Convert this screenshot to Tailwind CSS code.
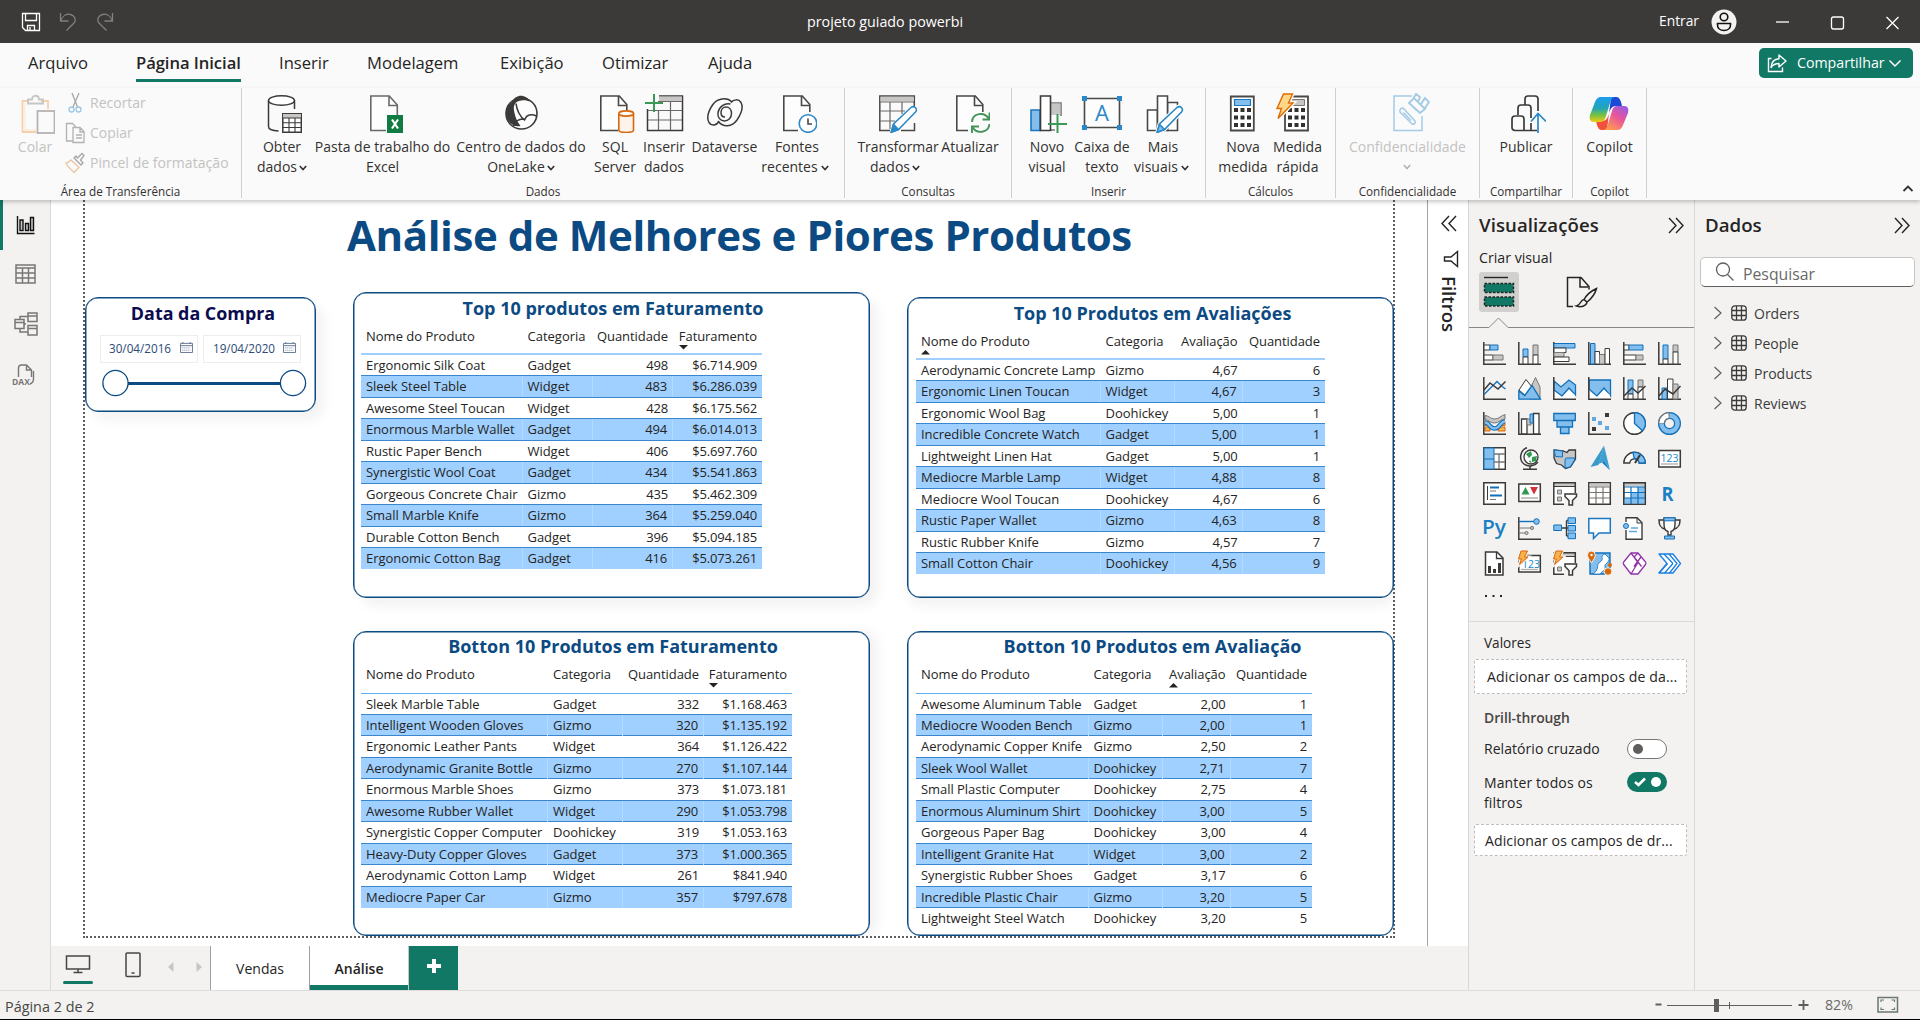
<!DOCTYPE html>
<html lang="pt-BR">
<head>
<meta charset="utf-8">
<title>projeto guiado powerbi</title>
<script src="https://cdn.jsdelivr.net/npm/@tailwindcss/browser@4"></script>
</head>
<body class="w-[1920px] h-[1020px] overflow-hidden bg-[#f3f2f1] font-['Open_Sans','Noto_Sans',sans-serif] text-[#252423]">
<div class="flex flex-col w-[1920px] h-[1020px]">

<!-- Title bar -->
<header class="relative flex items-center h-[43px] shrink-0 bg-[#3b3a39] text-white text-[14.3px]">
  <svg class="ml-[21px]" width="94" height="22" viewBox="0 0 94 22" fill="none" stroke="#fff" stroke-width="1.3">
    <path d="M1.5 2.5h17v17H4.500L1.500 16.500zM4.500 2.500v7h11v-7M6.500 19.500v-5h7v5M9 16v3"/>
    <g stroke="#82807e"><path d="M39.500 2v8h8M39.500 10c2-5 6-7.500 10-6.500 4.500 1 6 5.500 3.500 8.500L45.500 19.500"/><path d="M91.500 2v8h-8M91.500 10c-2-5-6-7.500-10-6.500-4.500 1-6 5.500-3.500 8.500L85.500 19.500"/></g>
  </svg>
  <span class="ml-[692px] w-[157px] whitespace-nowrap">projeto guiado powerbi</span>
  <span class="ml-[695px] w-[52px] text-[13.800px]">Entrar</span>
  <svg width="26" height="26" viewBox="0 0 26 26"><circle cx="13" cy="13" r="12.500" fill="#f3f2f1"/><g fill="none" stroke="#111" stroke-width="1.600"><circle cx="13" cy="8" r="3.800"/><path d="M6.500 14.500h13v1.500c0 3.300-2.900 5.500-6.500 5.500s-6.500-2.200-6.500-5.500z"/></g></svg>
  <svg class="ml-[38px]" width="126" height="16" viewBox="0 0 126 16" fill="none" stroke="#fff" stroke-width="1.300"><path d="M1 8h13"/><rect x="56.500" y="3" width="12" height="12" rx="2"/><path d="M111.500 3l12 12M123.500 3l-12 12"/></svg>
</header>

<!-- Ribbon tabs -->
<nav class="flex h-[45px] shrink-0 bg-[#fafafa] text-[16.600px] text-[#252423]">
  <div class="flex w-[1000px] h-[39px] leading-[39px] whitespace-nowrap">
    <span class="ml-[28px] w-[108px]">Arquivo</span>
    <span class="w-[105px] font-semibold text-[16.600px] tracking-[-0.050px] border-b-[3px] border-[#117865]">Página Inicial</span>
    <span class="ml-[38px] w-[88px]">Inserir</span>
    <span class="w-[133px]">Modelagem</span>
    <span class="w-[102px]">Exibição</span>
    <span class="w-[106px]">Otimizar</span>
    <span>Ajuda</span>
  </div>
  <button class="flex items-center ml-[759px] mt-[5px] w-[154px] h-[30px] rounded-[5px] bg-[#117865] text-white text-[14.200px] pl-[8px]">
    <svg width="21" height="20" viewBox="0 0 21 20" fill="none" stroke="#fff" stroke-width="1.400"><path d="M4.500 5.500H1.500v13h14v-4"/><path d="M12 2l7 6-7 6v-3.500c-4 0-6 1-8 4 .4-5 3-8.500 8-8.800z" stroke-linejoin="round"/></svg>
    <span class="ml-[9px] w-[91px] text-left">Compartilhar</span>
    <svg width="14" height="9" viewBox="0 0 14 9" fill="none" stroke="#fff" stroke-width="1.500"><path d="M1.500 1.500L7 7l5.500-5.500"/></svg>
  </button>
</nav>

<!-- Ribbon -->
<section class="relative z-10 flex h-[112px] shrink-0 bg-[#fafafa] text-[14px] leading-[20px] text-[#333130] shadow-[0_2px_4px_rgba(0,0,0,0.220)]">
  <div class="flex flex-col w-[242px] h-[110px] border-r border-[#d0d0d0]">
    <div class="flex h-[93px] shrink-0 text-[#c3c2c1]">
      <div class="flex flex-col items-center ml-[10px] w-[50px] pt-[5px]">
        <svg width="40" height="44" viewBox="0 0 40 44" fill="none" stroke-width="1.800"><path d="M14 8H7.500v31H21M26 8h7v8" stroke="#f5cfae"/><path d="M9.500 10v27H21" stroke="#fbeedb" stroke-width="2"/><path d="M13 10.500V6.500h4c0-5 7-5 7 0h4v4z" stroke="#c8c6c4"/><rect x="23.500" y="18" width="17" height="22" transform="translate(-1)" fill="#fafafa" stroke="#b5b3b1"/></svg>
        <span>Colar</span>
      </div>
      <div class="flex flex-col ml-[5px] whitespace-nowrap">
        <div class="flex items-center h-[30px]"><svg width="25" height="22" viewBox="0 0 25 22" fill="none" stroke-width="1.300"><path d="M7 1l5.500 14M14 1L8 15" stroke="#a8a6a4"/><circle cx="6.500" cy="17.500" r="2.500" stroke="#9cc6e6"/><circle cx="13.500" cy="17.500" r="2.500" stroke="#9cc6e6"/></svg>Recortar</div>
        <div class="flex items-center h-[30px]"><svg width="25" height="22" viewBox="0 0 25 22" fill="none" stroke="#b3b1af" stroke-width="1.300"><path d="M8 19H1.500V1.500h6l3 3M8 19V5.500h7l4 4v11H8zM15 5.500v4.500h4M11 13h6M11 16h6"/></svg>Copiar</div>
        <div class="flex items-center h-[30px] tracking-[0.050px]"><svg width="25" height="22" viewBox="0 0 25 22" fill="none" stroke-width="1.300"><path d="M6 8l8 7.500-5 5C6 18 3 15 1 11c2 0 3-1 5-3z" stroke="#f0c39c"/><path d="M9 6l7 7 2-2-2.500-3L19 3.500l-2-2L12.500 6 11 4z" stroke="#a8a6a4"/></svg>Pincel de formatação</div>
      </div>
    </div>
    <span class="text-center text-[11.700px] text-[#333130]">Área de Transferência</span>
  </div>

  <div class="flex flex-col w-[603px] h-[110px] border-r border-[#d0d0d0]">
    <div class="flex h-[93px] shrink-0 pl-[8px] pt-[5px] text-center whitespace-nowrap">
      <div class="flex flex-col items-center w-[64px]">
        <svg class="shrink-0 mb-[4px]" width="40" height="40" viewBox="0 0 40 40" fill="none" stroke="#3b3a39" stroke-width="1.500"><path d="M6.500 7.500v26c0 2.500 4 4.200 10 4.500M32.500 7.500V16" fill="none"/><ellipse cx="19.500" cy="7.500" rx="13" ry="4.800" fill="#fff"/><path d="M20.800 20.800h18.500v18.500H20.800z" fill="#fff"/><path d="M21 21h18v4H21z" fill="#c8c6c4" stroke="none"/><path d="M21 25h18M21 29.800h18M21 34.500h18M27 25v14M33 25v14" stroke-width="1.100"/></svg>
        <span class="w-[64px] text-center">Obter<br>dados<svg class="inline ml-[2px]" width="8" height="6" viewBox="0 0 8 6" fill="none" stroke="#333130" stroke-width="1.600"><path d="M.8 1L4 4.500 7.200 1"/></svg></span>
      </div>
      <div class="flex flex-col items-center w-[137px]">
        <svg class="shrink-0 mb-[4px]" width="40" height="40" viewBox="0 0 40 40" fill="none" stroke="#6b6967" stroke-width="1.600"><path d="M23 37.500H7.800V3h18.500l8 9v10" fill="#fdfdfd"/><path d="M26 3v9.500h8.500"/><path d="M24 22h16v18H24z" fill="#107c41" stroke="none"/><path d="M29 26.500l6 9M35 26.500l-6 9" stroke="#fff" stroke-width="2.200"/></svg>
        Pasta de trabalho do<br><span>Excel</span>
      </div>
      <div class="flex flex-col items-center w-[140px]">
        <svg class="shrink-0 mb-[4px]" width="40" height="40" viewBox="0 0 40 40" fill="none" stroke="#3b3a39" stroke-width="1.600"><circle cx="20.500" cy="20.500" r="15.500" fill="#fdfdfd"/><path d="M11 9c2-5 7-7 11-6s6 3 6.500 5.500C24 6.500 18 6.500 14.500 10c-2 2.500-2 6-1 10 1 5 3 9 6 13-5 1-9-1-12-5C3 21 4 14 11 9z" fill="#3b3a39" stroke="none"/><path d="M15 10.500c1 8 4 13 9 17M12.500 33c1.500-5 5-7.500 11.500-7 1.500-4 6-5.500 11.500-3"/></svg>
        <span class="tracking-[0.040px]">Centro de dados do</span><span>OneLake<svg class="inline ml-[2px]" width="8" height="6" viewBox="0 0 8 6" fill="none" stroke="#333130" stroke-width="1.600"><path d="M.8 1L4 4.500 7.200 1"/></svg></span>
      </div>
      <div class="flex flex-col items-center w-[48px]">
        <svg class="shrink-0 mb-[4px]" width="40" height="40" viewBox="0 0 40 40" fill="none" stroke="#4a4846" stroke-width="1.600"><path d="M23 37.500H5.800V3h18.500l7.500 8.500v6" fill="#fdfdfd"/><path d="M23.500 3v9.500H32"/><path d="M23.800 20.500v16.500c0 3.300 14.700 3.300 14.700 0V20.500" fill="#fdf3ea" stroke="#d9670b"/><ellipse cx="31.200" cy="20.500" rx="7.400" ry="2.600" fill="#fff" stroke="#d9670b"/></svg>
        SQL<br><span>Server</span>
      </div>
      <div class="flex flex-col items-center w-[50px]">
        <svg class="shrink-0 mb-[4px]" width="40" height="40" viewBox="0 0 40 40" fill="none" stroke="#6b6967" stroke-width="1.500"><path d="M3.500 16v21.500h35V3H15" stroke="#3b3a39"/><path d="M15 3.500h23v5H15z" fill="#c8c6c4" stroke="none"/><path d="M14 8.500h24M4 17.500h34M4 27h34M14.500 17v20M26.500 8v29" stroke-width="1.200"/><path d="M1 10h18M10 1v18" stroke="#3a9a55" stroke-width="2"/></svg>
        Inserir<br><span>dados</span>
      </div>
      <div class="flex flex-col items-center w-[71px]">
        <svg class="shrink-0 mb-[4px]" width="40" height="40" viewBox="0 0 40 40" fill="none" stroke="#3b3a39" stroke-width="1.500"><path d="M27 9C22 4 12 5 7.500 12c-4 6-6 13-3.500 17.500 2.500 4 7.500 3 10-1"/><path d="M13 28c5 7 14 6 19-1 4-6 6.500-13 4-17.500-2.500-4-7.500-3-10 0"/><path d="M25.500 11c-6-1.500-11.500 3-12.500 8.500-.8 5 2.500 8.500 6.500 8.500s7-3.500 7-7.500-2.500-6.500-5.500-6.500-5 2.500-5 5.500 2 4.500 4 4.500"/></svg>
        Dataverse
      </div>
      <div class="flex flex-col items-center w-[74px]">
        <svg class="shrink-0 mb-[4px]" width="40" height="40" viewBox="0 0 40 40" fill="none" stroke="#4a4846" stroke-width="1.600"><path d="M21 37.500H6.800V3h18.500l7.500 8.500V19" fill="#fdfdfd"/><path d="M24.500 3v9.500H33"/><circle cx="31" cy="30.500" r="8.800" fill="#fff" stroke="#2b88c8"/><path d="M31 25.500v5.500h4"/></svg>
        Fontes<br><span class="-ml-[4px]">recentes<svg class="inline ml-[3px]" width="8" height="6" viewBox="0 0 8 6" fill="none" stroke="#333130" stroke-width="1.600"><path d="M.8 1L4 4.500 7.200 1"/></svg></span>
      </div>
    </div>
    <span class="text-center text-[11.700px]">Dados</span>
  </div>

  <div class="flex flex-col w-[167px] h-[110px] border-r border-[#d0d0d0]">
    <div class="flex h-[93px] shrink-0 pl-[12px] pt-[5px] text-center whitespace-nowrap">
      <div class="flex flex-col items-center w-[80px]">
        <svg class="shrink-0 mb-[4px]" width="40" height="40" viewBox="0 0 40 40" fill="none" stroke="#6b6967" stroke-width="1.500"><path d="M13 37.500H2.800V3h34.500v10M37.500 30v7.500H24" stroke="#4a4846"/><path d="M3.500 3.800h33.500v4.500H3.500z" fill="#c8c6c4" stroke="none"/><path d="M3 9h34M3 18h25M3 28h15M13 9v27M25 9v12" stroke-width="1.200"/><path d="M14.500 39l2-8L34 14.500c3.500-2.500 7 1.500 4.500 4.500L21.500 36.500z" fill="#fff" stroke="#2b88c8"/><path d="M14 39.500l2.500-8 5 5z" fill="#2b88c8" stroke="#2b88c8"/></svg>
        <span class="tracking-[-0.050px] ml-[2px]">Transformar</span><span class="-ml-[4px]">dados<svg class="inline ml-[2px]" width="8" height="6" viewBox="0 0 8 6" fill="none" stroke="#333130" stroke-width="1.600"><path d="M.8 1L4 4.500 7.200 1"/></svg></span>
      </div>
      <div class="flex flex-col items-center w-[66px]">
        <svg class="shrink-0 mb-[4px]" width="40" height="40" viewBox="0 0 40 40" fill="none" stroke="#4a4846" stroke-width="1.600"><path d="M18 37.500H6.800V3h18.500l7.500 8.500V19" fill="#fdfdfd"/><path d="M24.500 3v9.500H33"/><path d="M22 29c.5-9 12.500-11 17-3M39.500 19.500V26.500h-7M39.500 31c-1 9-13 10.500-17 3M22 40.500V33.500h7" stroke="#43935a" stroke-width="1.900"/></svg>
        Atualizar
      </div>
    </div>
    <span class="text-center text-[11.700px]">Consultas</span>
  </div>

  <div class="flex flex-col w-[194px] h-[110px] border-r border-[#d0d0d0]">
    <div class="flex h-[93px] shrink-0 pl-[10px] pt-[5px] text-center whitespace-nowrap">
      <div class="flex flex-col items-center w-[50px]">
        <svg class="shrink-0 mb-[4px]" width="40" height="40" viewBox="0 0 40 40" fill="none" stroke-width="1.600"><path d="M4 17h9v20.500H4z" fill="#83beec" stroke="#1a78c2"/><path d="M24 10h10v13M24 37h4" stroke="#797775" fill="#c8c6c4"/><path d="M24 10.500h9.500V22H24z" fill="#c8c6c4" stroke="none"/><path d="M13.500 3h10v34.500h-10z" fill="#fff" stroke="#3b3a39"/><path d="M21 31h19M30.500 21v19" stroke="#3a9a55" stroke-width="2"/></svg>
        Novo<br><span>visual</span>
      </div>
      <div class="flex flex-col items-center w-[60px]">
        <svg class="shrink-0 mb-[4px]" width="40" height="40" viewBox="0 0 40 40" fill="none"><path d="M2.500 5.500h35v29h-35z" stroke="#4a4846" stroke-width="1.600" fill="#fdfdfd"/><g fill="#2b88c8"><path d="M0 3h5v5H0zM35 3h5v5h-5zM0 32h5v5H0zM35 32h5v5h-5z"/></g><text x="20" y="28" text-anchor="middle" font-size="22" fill="#2b88c8">A</text></svg>
        Caixa de<br><span>texto</span>
      </div>
      <div class="flex flex-col items-center w-[62px]">
        <svg class="shrink-0 mb-[4px] ml-[3px]" width="40" height="40" viewBox="0 0 40 40" fill="#fff" stroke="#4a4846" stroke-width="1.600"><path d="M2.500 17h10v20.500h-10zM22.500 9.500h10v28h-10z"/><path d="M12.500 3h10v34.500h-10z"/><path d="M12.500 39l2-8L32 14.500c3.500-2.500 7 1.500 4.500 4.500L19.500 36.500z" stroke="#fafafa" stroke-width="4"/><path d="M12.500 39l2-8L32 14.500c3.500-2.500 7 1.500 4.500 4.500L19.500 36.500z" stroke="#2b88c8"/><path d="M12 39.500l2.500-8 5 5z" fill="#83beec" stroke="#2b88c8"/></svg>
        Mais<br><span class="-ml-[3px]">visuais<svg class="inline ml-[3px]" width="8" height="6" viewBox="0 0 8 6" fill="none" stroke="#333130" stroke-width="1.600"><path d="M.8 1L4 4.500 7.200 1"/></svg></span>
      </div>
    </div>
    <span class="text-center text-[11.700px]">Inserir</span>
  </div>

  <div class="flex flex-col w-[130px] h-[110px] border-r border-[#d0d0d0]">
    <div class="flex h-[93px] shrink-0 pl-[10px] pt-[5px] text-center whitespace-nowrap">
      <div class="flex flex-col items-center w-[54px]">
        <svg class="shrink-0 mb-[4px]" width="40" height="40" viewBox="0 0 40 40"><path d="M7.800 3.500h23v34h-23z" fill="#fff" stroke="#4a4846" stroke-width="1.800"/><path d="M11.500 6.500h16v6h-16z" fill="#83beec" stroke="#1a78c2" stroke-width="1.200"/><path d="M11 15h4v4h-4zM17.500 15h4v4h-4zM24 15h4v4h-4zM11 22.500h4v4h-4zM17.500 22.500h4v4h-4zM24 22.500h4v4h-4zM11 30h4v4h-4zM17.500 30h4v4h-4zM24 30h4v4h-4z" fill="#333130"/></svg>
        Nova<br><span>medida</span>
      </div>
      <div class="flex flex-col items-center w-[55px]">
        <svg class="shrink-0 mb-[4px] -ml-[3px]" width="40" height="40" viewBox="0 0 40 40"><path d="M9 3.500h23v34H9z" fill="#fff" stroke="#4a4846" stroke-width="1.800"/><path d="M15 6.500h13.500v6H12z" fill="#c8c6c4" stroke="#797775"/><path d="M12 15h4v4h-4zM18.500 15h4v4h-4zM25 15h4v4h-4zM12 22.500h4v4h-4zM18.500 22.500h4v4h-4zM25 22.500h4v4h-4zM12 30h4v4h-4zM18.500 30h4v4h-4zM25 30h4v4h-4z" fill="#333130"/><path d="M7.500 1h9l-4 9h4.500L2 25.500l3.500-10H1z" fill="#fad27a" stroke="#fafafa" stroke-width="4"/><path d="M7.500 1h9l-4 9h4.500L2 25.500l3.500-10H1z" fill="#fdd78a" stroke="#e06c00" stroke-width="1.400"/></svg>
        Medida<br><span>rápida</span>
      </div>
    </div>
    <span class="text-center text-[11.700px]">Cálculos</span>
  </div>

  <div class="flex flex-col w-[144px] h-[110px] border-r border-[#d0d0d0]">
    <div class="flex h-[93px] shrink-0 justify-center pt-[5px] text-center text-[#c3c2c1] whitespace-nowrap">
      <div class="flex flex-col items-center">
        <svg class="shrink-0 mb-[4px] ml-[5px]" width="40" height="40" viewBox="0 0 40 40" fill="none" stroke="#a3cbe6" stroke-width="1.500"><path d="M22 3H4v34.500h28V23"/><path d="M10 19c-1-3 2-5 4-3l11 12c1 2-1 4-3 3zM13.500 19.500l7.500 8"/><path d="M19 10l5-5 11 11-5 4zM23 6l3-5 4 3-2 5M31 11l4-6 4 4-4 6M23 14l6 5" stroke-width="1.900"/></svg>
        Confidencialidade<br>
        <svg class="mt-[7px]" width="8" height="6" viewBox="0 0 8 6" fill="none" stroke="#b5b3b1" stroke-width="1.600"><path d="M.8 1L4 4.500 7.200 1"/></svg>
      </div>
    </div>
    <span class="text-center text-[11.700px]">Confidencialidade</span>
  </div>

  <div class="flex flex-col w-[93px] h-[110px] border-r border-[#d0d0d0]">
    <div class="flex h-[93px] shrink-0 justify-center pt-[5px] text-center">
      <div class="flex flex-col items-center">
        <svg class="shrink-0 mb-[4px]" width="40" height="40" viewBox="0 0 40 40" fill="none" stroke="#3b3a39" stroke-width="1.700"><path d="M19 12V6c0-2 1-3 3-3h7c2 0 3 1 3 3v12M12 22v-7c0-2 1-3 3-3h7c2 0 3 1 3 3v10M6 26c0-2 1-3 3-3h6c2 0 3 1 3 3v11.500H9c-2 0-3-1-3-3zM18 37.500h13M25 30v7"/><path d="M32 40V21M25 28.500l7-8 8 8" stroke="#2b88c8"/></svg>
        Publicar
      </div>
    </div>
    <span class="text-center text-[11.700px]">Compartilhar</span>
  </div>

  <div class="flex flex-col w-[74px] h-[110px] border-r border-[#d0d0d0]">
    <div class="flex h-[93px] shrink-0 justify-center pt-[5px] text-center">
      <div class="flex flex-col items-center">
        <svg class="shrink-0 mb-[4px]" width="40" height="40" viewBox="0 0 40 40">
          <defs>
            <linearGradient id="cpA" x1="0" y1="0" x2="0" y2="1"><stop offset="0" stop-color="#1a9cf0"/><stop offset=".45" stop-color="#22a6b8"/><stop offset=".7" stop-color="#6cc04a"/><stop offset="1" stop-color="#f2cb10"/></linearGradient>
            <linearGradient id="cpB" x1="1" y1="0" x2=".3" y2="1"><stop offset="0" stop-color="#8d5bf0"/><stop offset=".5" stop-color="#e8559a"/><stop offset="1" stop-color="#ff9a50"/></linearGradient>
          </defs>
          <path d="M22 4h5c3 0 4 2 5 5l1 4h-6c-4 0-6 3-7 8z" fill="#1b4bd6"/>
          <path d="M18 37h-5c-3 0-4-2-5-5l-1-4h6c4 0 6-3 7-8z" fill="#f0503c"/>
          <path d="M12 4h14c-3 0-4 3-5 6l-4 13c-1 4-3 6-6 6H5c-4 0-5-3-4-7L6 9c1-3 3-5 6-5z" fill="url(#cpA)"/>
          <path d="M28 37H14c3 0 4-3 5-6l4-13c1-4 3-5 6-5h6c4 0 5 3 4 7l-5 12c-1 3-3 5-6 5z" fill="url(#cpB)"/>
        </svg>
        Copilot
      </div>
    </div>
    <span class="text-center text-[11.700px]">Copilot</span>
  </div>
  <svg class="ml-[255px] mt-[96px]" width="12" height="9" viewBox="0 0 12 9" fill="none" stroke="#333" stroke-width="1.800"><path d="M1.500 7L6 2.500 10.500 7"/></svg>
</section>

<!-- Workspace -->
<main class="flex h-[790px] shrink-0">
  <aside class="flex flex-col w-[51px] border-r border-[#dbdad9]">
    <div class="flex items-center h-[50px] pl-[13px] border-l-[3px] border-[#117865]">
      <svg width="20" height="20" viewBox="0 0 20 20" fill="none" stroke="#111" stroke-width="1.400"><path d="M1.500 1v17.500h17"/><path d="M4 5h3v10.500H4zM9.500 8.500h3v7h-3zM14.500 2.500h3v13h-3z" fill="#c8c6c4"/></svg>
    </div>
    <div class="flex items-center h-[49px] pl-[15px] pb-[2px]"><svg width="21" height="20" viewBox="0 0 21 20" fill="none" stroke="#797775" stroke-width="1.500"><path d="M1 1h19v18H1zM1 4h19M1 9h19M1 14h19M7.500 4v15M13.500 4v15"/></svg></div>
    <div class="flex items-center h-[50px] pl-[14px]"><svg width="24" height="24" viewBox="0 0 24 24" fill="none" stroke="#797775" stroke-width="1.500"><path d="M1 7.500h9v9H1zM1 10.500h9M14 1h9v8.500h-9zM14 4h9M14 13.500h9V23h-9zM14 16.500h9M6 7.500V4.500h8M6 16.500V20h8M10 12h2"/></svg></div>
    <div class="flex items-center h-[50px] pl-[12px] pt-[3px]"><svg width="24" height="24" viewBox="0 0 24 24" fill="none" stroke="#797775" stroke-width="1.400"><path d="M6.500 13V4c0-2 1-3 3-3h5l5 5v7M14.500 1v5h5M21.500 7v8c0 3-1 4-3.500 5"/><text x="0" y="20.500" font-size="8.500" font-weight="700" stroke="none" fill="#797775">DAX</text></svg></div>
  </aside>

  <div class="flex flex-col w-[1417px]">
    <div class="flex h-[746px]">
      <!-- Report canvas: visuals are freely placed -->
      <div class="relative w-[1376px] bg-white overflow-hidden">
        <div class="absolute left-[32px] top-[-12px] w-[1312px] h-[750px] border-2 border-dotted border-[#605e5c]"></div>
        <h1 class="absolute left-[296px] top-[7px] leading-[56px] text-[42px] font-bold tracking-[-0.420px] text-[#0b4a82] whitespace-nowrap">Análise de Melhores e Piores Produtos</h1>

        <div class="absolute left-[34px] top-[97px] w-[231px] h-[115px] rounded-[13px] border border-[#0b4a82] bg-white shadow-[8px_8px_12px_rgba(0,0,0,0.050),inset_0_0_0_0.500px_#0b4a82]">
          <div class="h-[30px] leading-[30px] text-center pl-[5px] text-[17.900px] font-bold text-[#0b0b50]">Data da Compra</div>
          <div class="flex gap-[5px] mt-[7px] ml-[14px] text-[11.700px] text-[#2b4a78]">
            <div class="flex items-center w-[98px] h-[28px] border border-[#eeedec] pl-[8px]"><span class="w-[71px]">30/04/2016</span><svg class="shrink-0 mb-[3px]" width="13" height="11" viewBox="0 0 14 12" fill="none" stroke="#5c6f8c" stroke-width="1"><path d="M.5 1.500h13v10H.5zM1 4h12"/><path d="M2.500 6.500h9M2.500 9h9" stroke-dasharray="1 1.200"/><path d="M3 0v2M11 0v2"/></svg></div>
            <div class="flex items-center w-[98px] h-[28px] border border-[#eeedec] pl-[9px]"><span class="w-[70px]">19/04/2020</span><svg class="shrink-0 mb-[3px]" width="13" height="11" viewBox="0 0 14 12" fill="none" stroke="#5c6f8c" stroke-width="1"><path d="M.5 1.500h13v10H.5zM1 4h12"/><path d="M2.500 6.500h9M2.500 9h9" stroke-dasharray="1 1.200"/><path d="M3 0v2M11 0v2"/></svg></div>
          </div>
          <svg class="ml-[16px] mt-[6px]" width="206" height="28" viewBox="0 0 206 28"><path d="M26 14.500h154" stroke="#0b4a82" stroke-width="3"/><circle cx="13.500" cy="14" r="12.600" fill="#fff" stroke="#0b4a82" stroke-width="1.300"/><circle cx="191" cy="14" r="12.600" fill="#fff" stroke="#0b4a82" stroke-width="1.300"/></svg>
        </div>

        <div id="topFat" class="absolute left-[302px] top-[92px] w-[517px] h-[306px] pl-[7px] pt-[1px] rounded-[13px] border border-[#0b4a82] bg-white shadow-[8px_8px_12px_rgba(0,0,0,0.050),inset_0_0_0_0.500px_#0b4a82]"></div>
        <div id="topAva" class="absolute left-[856px] top-[97px] w-[487px] h-[301px] pl-[8px] pt-[1px] rounded-[13px] border border-[#0b4a82] bg-white shadow-[0_8px_12px_rgba(0,0,0,0.050),inset_0_0_0_0.500px_#0b4a82]"></div>
        <div id="botFat" class="absolute left-[302px] top-[431px] w-[517px] h-[305px] pl-[7px] rounded-[13px] border border-[#0b4a82] bg-white shadow-[8px_0_12px_rgba(0,0,0,0.050),inset_0_0_0_0.500px_#0b4a82]"></div>
        <div id="botAva" class="absolute left-[856px] top-[431px] w-[487px] h-[305px] pl-[8px] rounded-[13px] border border-[#0b4a82] bg-white shadow-[inset_0_0_0_0.500px_#0b4a82]"></div>
      </div>

      <!-- Collapsed filter pane -->
      <div class="flex flex-col items-center w-[41px] bg-white border-l border-[#a5a3a1]">
        <svg class="mt-[15px] ml-[1px]" width="16" height="17" viewBox="0 0 16 17" fill="none" stroke="#252423" stroke-width="1.400"><path d="M8 1L1 8.500 8 16M15 1L8 8.500 15 16"/></svg>
        <svg class="mt-[18px] ml-[6px]" width="16" height="18" viewBox="0 0 16 18" fill="none" stroke="#252423" stroke-width="1.400"><path d="M14.500 1.500v15L8 11H1.500V7H8z"/></svg>
        <span class="mt-[8px] ml-[1px] [writing-mode:vertical-rl] text-[18.600px] leading-[20px] font-semibold">Filtros</span>
      </div>
    </div>

    <!-- Page tabs -->
    <div class="flex h-[44px]">
      <div class="flex flex-col w-[30px] ml-[12px] pt-[9px] items-center">
        <svg width="26" height="19" viewBox="0 0 26 19" fill="none" stroke="#484644" stroke-width="1.500"><path d="M1.500 1h23v13h-23zM13 14v3.500M8.500 17.500h9"/></svg>
        <span class="w-[30px] h-[3px] mt-[7px] rounded bg-[#117865]"></span>
      </div>
      <svg class="ml-[32px] mt-[6px]" width="16" height="26" viewBox="0 0 16 26" fill="none" stroke="#484644" stroke-width="1.500"><rect x="1" y="1" width="14" height="23.500" rx="1"/><path d="M6.500 21h3"/></svg>
      <svg class="ml-[26px] mt-[15px]" width="36" height="12" viewBox="0 0 36 12" fill="#c8c6c4"><path d="M6.500 1v10L1 6zM29.500 1v10L35 6z"/></svg>
      <div class="ml-[7px] w-[100px] border-l border-r border-[#a19f9d] bg-white text-center text-[14px] leading-[45px]">Vendas</div>
      <div class="w-[99px] bg-white border-r border-[#c8c6c4] text-center text-[14px] font-semibold leading-[45px] shadow-[inset_0_-5px_0_#117865]">Análise</div>
      <div class="flex w-[49px] bg-[#117865] items-center justify-center pb-[4px]"><svg width="14" height="14" viewBox="0 0 14 14" stroke="#fff" stroke-width="4"><path d="M7 0v14M0 7h14"/></svg></div>
    </div>
  </div>

  <!-- Visualizations pane -->
  <section class="flex flex-col w-[226px] border-l border-[#d8d7d6] text-[14px]">
    <div class="flex items-center justify-between mt-[12px] h-[26px] pl-[10px] pr-[10px] text-[18.600px] font-semibold">
      <span class="tracking-[0.080px]">Visualizações</span>
      <svg width="16" height="17" viewBox="0 0 16 17" fill="none" stroke="#252423" stroke-width="1.400"><path d="M1 1l7 7.500L1 16M8 1l7 7.500L8 16"/></svg>
    </div>
    <span class="mt-[10px] ml-[10px] leading-[20px] text-[14.200px] font-medium">Criar visual</span>
    <div class="flex mt-[4px] ml-[10px]">
      <div class="flex items-center justify-center size-[40px] rounded-[3px] bg-[#d2d0ce]">
        <svg width="32" height="32" viewBox="0 0 32 32"><path d="M1 1.500h24" stroke="#252423" stroke-width="1.400"/><g fill="#117865" stroke="#252423" stroke-width="1.500" stroke-dasharray="2.500 1.500"><path d="M1.500 7.500h29v9h-29zM1.500 21h29v9h-29z"/></g></svg>
      </div>
      <svg class="ml-[47px] mt-[4px]" width="32" height="32" viewBox="0 0 32 32" fill="none" stroke="#252423" stroke-width="1.500"><path d="M7 30.500H1.500V1.500H15l8 9v3M14 1.500v9.500h8"/><path d="M30.500 12.500C25 15 20 20 18 23.500l3 2.500c4-3 8-8 9.500-13.500zM18 23.500c-4 .5-3 5.500-7.500 6.500 4 1.500 10 .5 10.500-4"/></svg>
    </div>
    <svg class="mt-[5px]" width="225" height="12" viewBox="0 0 225 12" fill="none" stroke="#8a8886"><path d="M0 10.500h20l9.500-9.500 9.500 9.500H225"/></svg>
    <div id="viz" class="grid grid-cols-6 grid-rows-7 w-[210px] ml-[13px] mt-[12px] auto-rows-[35px]"></div>
    <svg class="ml-[15px] mt-[8px]" width="20" height="4" viewBox="0 0 20 4" fill="#252423"><path d="M1 1h2v2H1zM8.500 1h2v2h-2zM16 1h2v2h-2z"/></svg>
    <div class="mt-[23px] border-t border-[#dbdad9]"></div>
    <span class="mt-[11px] ml-[15px] leading-[20px] text-[13.600px]">Valores</span>
    <div class="mt-[6px] ml-[5px] w-[213px] h-[35px] border border-dashed border-[#c0bebc] bg-white pl-[12px] leading-[33px] tracking-[0.100px] whitespace-nowrap rounded-[2px] text-[14.100px]">Adicionar os campos de da...</div>
    <span class="mt-[14px] ml-[15px] leading-[20px] text-[#484644] font-semibold text-[13.900px] tracking-[-0.050px]">Drill-through</span>
    <div class="flex mt-[11px] ml-[15px] leading-[20px]"><span class="w-[143px] tracking-[0.050px]">Relatório cruzado</span>
      <span class="flex items-center w-[40px] h-[20px] rounded-full border border-[#797775] bg-white pl-[5px]"><span class="size-[10px] rounded-full bg-[#605e5c]"></span></span></div>
    <div class="flex mt-[14px] ml-[15px] leading-[20px]"><span class="w-[143px] tracking-[0.120px]">Manter todos os<br>filtros</span>
      <span class="flex items-center w-[40px] h-[20px] mt-[-1px] rounded-full bg-[#117865] pl-[7px] gap-[5px]"><svg width="12" height="10" viewBox="0 0 12 10" fill="none" stroke="#fff" stroke-width="2.600"><path d="M1 5l3.500 3L11 1.500"/></svg><span class="size-[10px] rounded-full bg-white"></span></span></div>
    <div class="mt-[11px] ml-[5px] w-[213px] h-[32px] border border-dashed border-[#c0bebc] bg-white pl-[10px] leading-[32px] tracking-[0.080px] whitespace-nowrap rounded-[2px] text-[14.100px]">Adicionar os campos de dr...</div>
  </section>

  <!-- Data pane -->
  <section class="flex flex-col w-[226px] border-l border-[#d8d7d6]">
    <div class="flex items-center justify-between mt-[12px] h-[26px] pl-[10px] pr-[10px] text-[18.700px] font-semibold">
      <span>Dados</span>
      <svg width="16" height="17" viewBox="0 0 16 17" fill="none" stroke="#252423" stroke-width="1.400"><path d="M1 1l7 7.500L1 16M8 1l7 7.500L8 16"/></svg>
    </div>
    <div class="flex items-center mt-[19px] ml-[5px] w-[215px] h-[30px] rounded-[5px] border border-[#c8c6c4] border-b-[#605e5c] bg-white pl-[14px] text-[15.800px] text-[#6b6967]">
      <svg width="20" height="20" viewBox="0 0 20 20" fill="none" stroke="#605e5c" stroke-width="1.300"><circle cx="8" cy="7.500" r="6.500"/><path d="M12.500 12.500L18.500 18.500"/></svg>
      <span class="ml-[8px] pt-[5px]">Pesquisar</span>
    </div>
    <div id="tables" class="mt-[11px] text-[14px] text-[#3b3a39]"></div>
  </section>
</main>

<!-- Status bar -->
<footer class="flex items-center h-[30px] shrink-0 border-t border-[#dddcdb] border-b border-b-black pl-[5px] text-[14.400px] text-[#484644]">
  <span class="w-[1648px] pt-[3px]">Página 2 de 2</span>
  <svg width="160" height="20" viewBox="0 0 160 20" fill="none" stroke="#605e5c"><path d="M2.500 9.500h6" stroke-width="2"/><path d="M14 10.500h125" stroke-width="1.200"/><path d="M63.500 4v13" stroke-width="5"/><path d="M76.500 7v7"/><path d="M145.500 10h10M150.500 5v10" stroke-width="1.800"/></svg>
  <span class="ml-[12px] w-[52px] text-[14.200px] text-[#6b6967]">82%</span>
  <svg width="22" height="18" viewBox="0 0 22 18" fill="none" stroke="#6b7775" stroke-width="1.500"><path d="M1 1.500h19.500v14.500H1z"/><path d="M4 6V4h3M14.500 4h3v2M17.500 11.500v2h-3M7 13.500H4v-2" stroke-width="1.200"/></svg>
</footer>
</div>

<script>
const tables = [
  {id:'topFat', title:'Top 10 produtos em Faturamento', cols:'grid grid-cols-[161.500px_70px_80.500px_89px] w-[401px]', rule:'h-[33px] border-b-2 border-[#9fcfff]', sort:[3,'down'],
   head:['Nome do Produto','Categoria','Quantidade','Faturamento'],
   rows:[['Ergonomic Silk Coat','Gadget','498','$6.714.909'],['Sleek Steel Table','Widget','483','$6.286.039'],['Awesome Steel Toucan','Widget','428','$6.175.562'],['Enormous Marble Wallet','Gadget','494','$6.014.013'],['Rustic Paper Bench','Widget','406','$5.697.760'],['Synergistic Wool Coat','Gadget','434','$5.541.863'],['Gorgeous Concrete Chair','Gizmo','435','$5.462.309'],['Small Marble Knife','Gizmo','364','$5.259.040'],['Durable Cotton Bench','Gadget','396','$5.094.185'],['Ergonomic Cotton Bag','Gadget','416','$5.073.261']]},
  {id:'topAva', title:'Top 10 Produtos em Avaliações', cols:'grid grid-cols-[184.500px_74px_68px_82.500px] w-[409px]', rule:'h-[33px] border-b-2 border-[#9fcfff]', sort:[0,'up'],
   head:['Nome do Produto','Categoria','Avaliação','Quantidade'],
   rows:[['Aerodynamic Concrete Lamp','Gizmo','4,67','6'],['Ergonomic Linen Toucan','Widget','4,67','3'],['Ergonomic Wool Bag','Doohickey','5,00','1'],['Incredible Concrete Watch','Gadget','5,00','1'],['Lightweight Linen Hat','Gadget','5,00','1'],['Mediocre Marble Lamp','Widget','4,88','8'],['Mediocre Wool Toucan','Doohickey','4,67','6'],['Rustic Paper Wallet','Gizmo','4,63','8'],['Rustic Rubber Knife','Gizmo','4,57','7'],['Small Cotton Chair','Doohickey','4,56','9']]},
  {id:'botFat', title:'Botton 10 Produtos em Faturamento', cols:'grid grid-cols-[187px_75px_81px_88px] w-[431px]', rule:'h-[33.600px] border-b border-[#62aef2]', sort:[3,'down'],
   head:['Nome do Produto','Categoria','Quantidade','Faturamento'],
   rows:[['Sleek Marble Table','Gadget','332','$1.168.463'],['Intelligent Wooden Gloves','Gizmo','320','$1.135.192'],['Ergonomic Leather Pants','Widget','364','$1.126.422'],['Aerodynamic Granite Bottle','Gizmo','270','$1.107.144'],['Enormous Marble Shoes','Gizmo','373','$1.073.181'],['Awesome Rubber Wallet','Widget','290','$1.053.798'],['Synergistic Copper Computer','Doohickey','319','$1.053.163'],['Heavy-Duty Copper Gloves','Gadget','373','$1.000.365'],['Aerodynamic Cotton Lamp','Widget','261','$841.940'],['Mediocre Paper Car','Gizmo','357','$797.678']]},
  {id:'botAva', title:'Botton 10 Produtos em Avaliação', cols:'grid grid-cols-[172.500px_74px_68px_81.500px] w-[396px]', rule:'h-[33.600px] border-b border-[#62aef2]', sort:[2,'up'],
   head:['Nome do Produto','Categoria','Avaliação','Quantidade'],
   rows:[['Awesome Aluminum Table','Gadget','2,00','1'],['Mediocre Wooden Bench','Gizmo','2,00','1'],['Aerodynamic Copper Knife','Gizmo','2,50','2'],['Sleek Wool Wallet','Doohickey','2,71','7'],['Small Plastic Computer','Doohickey','2,75','4'],['Enormous Aluminum Shirt','Doohickey','3,00','5'],['Gorgeous Paper Bag','Doohickey','3,00','4'],['Intelligent Granite Hat','Widget','3,00','2'],['Synergistic Rubber Shoes','Gadget','3,17','6'],['Incredible Plastic Chair','Gizmo','3,20','5'],['Lightweight Steel Watch','Doohickey','3,20','5']]}
];
const arrows = {down:'<path d="M0 0h9L4.500 4.500z"/>', up:'<path d="M0 4.500h9L4.500 0z"/>'};
for (const t of tables) {
  const head = t.head.map((h, i) => `<div class="relative ${i > 1 ? 'text-right pr-[5px] tracking-[-0.060px]' : 'px-[5px]'}"><span class="relative">${h}${t.sort[0] === i ? `<svg class="absolute left-0 top-[18px]" width="9" height="5" viewBox="0 0 9 5" fill="#252423">${arrows[t.sort[1]]}</svg>` : ''}</span></div>`).join('');
  const rows = t.rows.map((r, n) => {
    const last = n === t.rows.length - 1;
    return `<div class="${t.cols} h-[21.440px] leading-[21px] ${n % 2 ? 'bg-[#a0d0ff]' : ''} ${last ? '' : 'border-b border-[#3a86d0]'}">` +
      r.map((c, i) => `<div class="px-[5px] ${i > 1 ? 'text-right tracking-[-0.150px]' : 'tracking-[-0.040px]'} ${i < 3 && n % 2 ? 'border-r border-[#b3daff]' : ''}">${c}</div>`).join('') + '</div>';
  }).join('');
  document.getElementById(t.id).innerHTML =
    `<div class="h-[28px] leading-[29px] text-center pr-[4px] text-[18px] font-bold text-[#0b4a82]">${t.title}</div>` +
    `<div class="text-[13px] whitespace-nowrap"><div class="${t.cols} ${t.rule} pt-[4px] leading-[20px]">${head}</div>${rows}</div>`;
}

const D = 'fill="#fff" stroke="#3b3a39"', B = 'fill="#83beec" stroke="#1070bb"', G = 'fill="#c8c6c4" stroke="#797775"';
const axis = '<path d="M.8 0v22.200H23" fill="none" stroke="#3b3a39" stroke-width="1.500"/>';
const bolt = '<path d="M2.500-1h7l-3 6H10L1 13l2-6H0z" fill="#f9b14a" stroke="#f3f2f1" stroke-width="3"/><path d="M3-1h6.500l-3 6H10L1.500 12.500 3.500 7H.5z" fill="#f9b14a" stroke="#d9670b"/>';
const funnel = '<path d="M12 12h11.500v2.500l-4 4V23h-3.500v-4.500l-4-4z" fill="#fff" stroke="#3b3a39" stroke-width="1.500"/>';
const icons = [
  axis+`<path ${D} d="M1 3h6v5H1z"/><path ${B} d="M7 3h8v5H7z"/><path ${D} d="M1 13h9v5H1z"/><path ${G} d="M10 13h10v5H10z"/>`,
  axis+`<path ${B} d="M5 7h5v8H5z"/><path ${D} d="M5 15h5v7H5z"/><path ${G} d="M15 3h5v10h-5z"/><path ${D} d="M15 13h5v9h-5z"/>`,
  axis+`<path ${B} d="M1 1.500h21V6H1z"/><path ${D} d="M1 6h12v4.500H1z"/><path ${G} d="M1 10.500h10V15H1z"/><path ${D} d="M1 15h15v4.500H1z"/>`,
  axis+`<path ${B} d="M2.500 1.500H7V22H2.500z"/><path ${D} d="M7 9.500h4.500V22H7z"/><path ${G} d="M11.500 12.500H17V22h-5.500z"/><path ${D} d="M17 6.500h4.500V22H17z"/>`,
  axis+`<path ${D} d="M1 3h5v5H1z"/><path ${B} d="M6 3h14v5H6z"/><path ${D} d="M1 13h12v5H1z"/><path ${G} d="M13 13h7v5h-7z"/>`,
  axis+`<path ${B} d="M5 3h5v14H5z"/><path ${D} d="M5 17h5v5H5z"/><path ${G} d="M15 3h5v7h-5z"/><path ${D} d="M15 10h5v12h-5z"/>`,
  axis+`<g fill="none" stroke-width="1.500"><path d="M1 17.500L14 4.500l4.500 4.500 4 3" stroke="#1a78c2"/><path d="M1 13l6-7 8 6L22.500 4.500" stroke="#3b3a39"/></g>`,
  `<path ${G} d="M12 12L17.500.5 22 10v12H12z"/><path ${D} d="M1 13L8 2.500 14 10l-6 9z"/><path ${B} stroke-width="1.300" d="M.8 22.200V14l6 4.500L14 8.500l8.500 13.700z"/>`,
  `<path ${B} stroke-width="1.300" d="M1 4l7 6 8-7 6.500 5v10L16 11l-7 8-8-6z"/><path d="M2 22v-7l7 5 7-7 6 5v4z" fill="#fff"/>`+axis,
  `<path ${B} stroke-width="1.300" d="M1 3h21.500v16L16 11l-7 8-8-7z"/><path d="M2 22v-7l7 5 7-7 6 5v4z" fill="#fff"/>`+axis,
  axis+`<path ${B} d="M5 3h5v14H5z"/><path ${D} d="M5 17h5v5H5z"/><path ${G} d="M15 3h5v7h-5z"/><path ${D} d="M15 10h5v12h-5z"/><path d="M1 19l8-8 6 5 7.500-7" fill="none" stroke="#3b3a39" stroke-width="1.500"/>`,
  axis+`<path ${B} d="M4 11h5v11H4z"/><path ${D} d="M9.500 2H15v20H9.500z"/><path ${G} d="M15 7h5v15h-5z"/><path d="M1 19l6-7 8 5 7.500-8" fill="none" stroke="#3b3a39" stroke-width="1.500"/>`,
  `<path d="M2 15h5v4H2zM15 15h7v4h-7z" fill="#f9b14a" stroke="#d9670b"/><path d="M2 9.500h4v4H2zM18 9.500h4v4h-4z" fill="#f9b14a" stroke="#d9670b"/><path ${G} d="M2 3.500c4 0 5 3.500 9.500 3.500S18 3.500 22 2.500V7c-4 0-6 4-10.500 4S6 8 2 7.500z"/><path fill="none" stroke="#1070bb" stroke-width="4.500" d="M2 10.500c5 0 4 6 9.500 6S17 9.500 22 9.500"/><path fill="none" stroke="#83beec" stroke-width="2.500" d="M2 10.500c5 0 4 6 9.500 6S17 9.500 22 9.500"/>`+axis,
  axis+`<path ${D} stroke-width="1.300" d="M3.500 7H9v15H3.500zM15.500 1.500h5.500V22h-5.500z"/><path ${G} d="M9 7h4v6H9z"/><path ${B} d="M12 2h3v9h-3z"/>`,
  `<path ${B} stroke-width="1.300" d="M.8 1.500h21.500v7H.8zM4 8.500h15.500V15H4zM7.500 15H16v6.500H7.500z"/>`,
  axis+`<path fill="#3b3a39" d="M17 1h4v4h-4zM4 15h4v4H4z"/><path fill="#5fa8e0" d="M4 5h4v4H4zM10 9h4v4h-4zM17 14h4v4h-4z"/>`,
  `<circle cx="11.500" cy="11.500" r="10.800" ${D} stroke-width="1.400"/><path ${B} stroke-width="1.300" d="M11.500.7a10.800 10.800 0 0 1 8 18.100l-8-7.300z"/>`,
  `<circle cx="11.500" cy="11.500" r="8" fill="none" stroke="#1070bb" stroke-width="7"/><circle cx="11.500" cy="11.500" r="8" fill="none" stroke="#83beec" stroke-width="4.500"/><path d="M3.500 11.500a8 8 0 0 1 8-8" fill="none" stroke="#797775" stroke-width="7"/><path d="M3.500 11a8 8 0 0 1 7-7.500" fill="none" stroke="#fff" stroke-width="4.500"/>`,
  `<path ${D} stroke-width="1.400" d="M.8.800h21.500v21.500H.8z"/><path ${B} d="M1 1h10v21H1zM1 12h10"/><path d="M11 7h11M16 7v15M11 15h5M16 15h6" stroke="#797775" fill="none" stroke-width="1.300"/>`,
  `<circle cx="13" cy="10" r="7" fill="#fff" stroke="#3b3a39" stroke-width="1.300"/><path d="M8 7l5-3 1 4-3 3zM14 10l5-1-1 5-4 1zM12 13l2 3-3-1z" fill="#2f9a4f"/><path d="M9 .8C2 3 .5 13 6 17c5 3.500 11 2 14-2M12 19v3M5 22.200h14" fill="none" stroke="#3b3a39" stroke-width="1.500"/>`,
  `<path fill="#c8c6c4" stroke="#3b3a39" stroke-width="1.300" d="M1 3l9 1 4 1.500 2-2.500h6.500v9l-5 8-5 1.500-4-3.500-5-1.500L1 11z"/><path ${B} d="M1 3l8.500 1v6L2.500 9.500zM12 13l1-2h9l-1 3-4 6-5 1z"/>`,
  `<path d="M16-1.500L2.500 20l8-2z" fill="#3a9bc8"/><path d="M16-1.500L10.500 17l6-2.500 5.500 8.500z" fill="#3f9fd0"/><path d="M14 15.500l2.500-1L22 23.500z" fill="#0f78c8"/>`,
  `<path ${D} stroke-width="1.400" d="M.8 16a10.700 10.700 0 0 1 21.400 0h-6a4.800 4.800 0 0 0-9.500 0z"/><path ${B} stroke-width="1.300" d="M10 5.500A10.700 10.700 0 0 1 22.200 16h-6a5 5 0 0 0-5-4.500z"/><path d="M17 8l-5 8" stroke="#3b3a39" stroke-width="2"/>`,
  `<path ${D} stroke-width="1.500" d="M.8 3.500h21.500v16.500H.8z"/><text x="11.500" y="15" text-anchor="middle" font-size="10.500" fill="#1a88d0">123</text><path d="M3 17h17" stroke="#b0aeac" stroke-width="1.300"/>`,
  `<path ${D} stroke-width="1.500" d="M.8.800h21.500v21.500H.8z"/><path d="M4.500 4v14" stroke="#3b3a39"/><path d="M7 5.500h9M7 13.500h12" stroke="#1070bb" stroke-width="1.800"/><path d="M7 9h6M7 17.500h6" stroke="#797775" stroke-width="1.200"/>`,
  `<path ${D} stroke-width="1.500" d="M.8 2h21.500v17.500H.8z"/><path d="M3.500 12.500L7.500 5l4 7.500z" fill="#2f9a4f"/><path d="M12 5h8l-4 7.500z" fill="#d13438"/><path d="M3 16h17" stroke="#b0aeac" stroke-width="1.500"/>`,
  `<path ${D} stroke-width="1.500" d="M.8.800h21.500v21.500H.8z"/><path d="M1 1h21v3.500H1z" fill="#c8c6c4" stroke="#3b3a39"/><path ${G} d="M4.500 8h4v4h-4zM4.500 15h4v4h-4z"/><path d="M11 11h13v13H11z" fill="#f3f2f1"/>`+funnel,
  `<path ${D} stroke-width="1.500" d="M.8.800h21.500v21.500H.8z"/><path d="M1.500 1.500h20v3h-20z" fill="#c8c6c4"/><path d="M1 5h21M1 10.500h21M1 16h21M8 5v17M15 5v17" stroke="#797775" stroke-width="1.200"/>`,
  `<path ${D} stroke-width="1.500" d="M.8.800h21.500v21.500H.8z"/><path d="M1.500 1.500h20v3h-20z" fill="#c8c6c4"/><path d="M15 5h7v17H8v-6h7zM1 16h7v6H1zM8 10.500h7V16H8z" fill="#83beec"/><path d="M1 5h21M1 10.500h21M1 16h21M8 5v17M15 5v17" stroke="#1070bb" stroke-width="1.200"/><path d="M.8.800h21.500v21.500H.8z" fill="none" stroke="#3b3a39" stroke-width="1.300"/>`,
  `<text x="3.500" y="18.500" font-size="20" font-weight="700" fill="#1a80c4" textLength="12" lengthAdjust="spacingAndGlyphs">R</text>`,
  `<text x="-1" y="17" font-size="20" font-weight="600" fill="#1a80c4" textLength="24" lengthAdjust="spacingAndGlyphs">Py</text>`,
  axis+`<path d="M1 4.500h16" stroke="#1070bb" stroke-width="1.400"/><circle cx="18.500" cy="4.500" r="2.800" ${B}/><path d="M1 11h12M1 16h6" stroke="#797775" stroke-width="1.200"/><circle cx="14" cy="11" r="1.600" ${G}/><circle cx="8.500" cy="16" r="1.600" ${G}/>`,
  `<path d="M9 11h9M13.500 3.500v15.500M13.500 3.500H16M13.500 19H16" fill="none" stroke="#3b3a39" stroke-width="1.400"/><path ${B} d="M.8 8h7.700v5.500H.8zM15 .8h7.500v5.700H15zM15 8.500h7.500V14H15zM15 16h7.500v5.700H15z"/>`,
  `<path d="M.8 1.500h21.500V16H11l-5.500 5.500V16H.8z" fill="#fff" stroke="#1a78c2" stroke-width="1.500"/>`,
  `<path ${D} stroke-width="1.400" d="M3 5V.8h11l5 5v16.500H3V13"/><path d="M14 .8V6h5" fill="none" stroke="#3b3a39"/><circle cx="3" cy="9" r="2.500" ${B}/><path d="M8 11h7M6 14.500h8" stroke="#5fa8e0" stroke-width="1.400"/>`,
  `<path d="M6 3H1c0 6 2 8 6 9M17 3h5c0 6-2 8-6 9" fill="none" stroke="#3b3a39" stroke-width="1.500"/><path ${D} stroke-width="1.400" d="M6 1h11v6c0 5-2 7-4 7.500V18h-3v-3.500C8 14 6 12 6 7z"/><path ${B} d="M6 .8h11v3H6zM6.500 19h10v3h-10z"/>`,
  `<path ${D} stroke-width="1.500" d="M2.500 0H14l6 6v17H2.500z"/><path d="M13.500 0v6.500H20" fill="none" stroke="#3b3a39" stroke-width="1.300"/><path d="M5 14h3v7H5zM10 17h3v4h-3zM15 11h3v10h-3z" fill="#3b3a39"/>`,
  `<path ${D} stroke-width="1.500" d="M.8 3.500h21.500v16.500H.8z"/><text x="13" y="15.500" text-anchor="middle" font-size="10.500" fill="#1a88d0">123</text><path d="M3 17.500h17" stroke="#b0aeac" stroke-width="1.300"/>`+bolt,
  `<path ${D} stroke-width="1.500" d="M.8.800h21.500v21.500H.8z"/><path d="M1 1h21v3.500H1z" fill="#c8c6c4" stroke="#3b3a39"/><path ${G} d="M4.500 15h4v4h-4z"/><path d="M11 11h13v13H11z" fill="#f3f2f1"/>`+funnel+bolt,
  `<path ${B} stroke-width="1.400" d="M2 1h20v21H2z"/><path d="M17 2c-6 2 0 5-5 8s1 6-7 12h7c3-4 6-3 5-7s5-4 4-9z" fill="#fff" stroke="#1070bb" stroke-width=".8"/><path d="M3.500 11C1 7-.5 5.500-.5 3A3.800 3.800 0 0 1 7.300 3c0 2.500-1.500 4-3.800 8z" fill="#d9670b" stroke="#f3f2f1"/><circle cx="3.500" cy="3" r="1.200" fill="#fff"/><circle cx="20" cy="19.500" r="3.800" fill="#d9670b" stroke="#f3f2f1"/><circle cx="22" cy="13" r="2" fill="#d9670b"/>`,
  `<g fill="#fff" stroke="#9332a8" stroke-width="1.300" stroke-linejoin="round"><path d="M8 1h7l7.500 9c.7 1 .7 1.500 0 2.500L15 22H8L.7 12.500c-.7-1-.7-1.500 0-2.500z"/><path d="M8 1l7 9.500L8 22M11 5L15 1M11.500 5.500l7 9M15 10.500l-4 6.500M18 5L11 14.500" fill="none"/></g>`,
  `<g fill="#fff" stroke="#1a7fe0" stroke-width="1.300" stroke-linejoin="round"><path d="M1 2h14l7.500 9.500L15 21H1l8-9.500z"/><path d="M6 2l9 9.500M1 21l8.500-9.500M6.500 21L15 11.500M11 2l8 9.500L11.500 21" fill="none"/></g>`
];
document.getElementById('viz').innerHTML = icons.map(i => `<div class="w-[35px] h-[35px] pt-[1px] pl-px"><svg class="overflow-visible" width="23" height="23" viewBox="0 0 23 23">${i}</svg></div>`).join('');
document.getElementById('tables').innerHTML = ['Orders','People','Products','Reviews'].map(n => `<div class="flex items-center h-[30px] pl-[18px]"><svg width="10" height="14" viewBox="0 0 10 14" fill="none" stroke="#605e5c" stroke-width="1.200"><path d="M1.500 1L8 7l-6.500 6"/></svg><svg class="ml-[8px] mr-[7px]" width="16" height="16" viewBox="0 0 16 16" fill="none" stroke="#3b3a39" stroke-width="1.300"><rect x=".8" y=".8" width="14.400" height="14.400" rx="3"/><path d="M1 5.500h14M1 10.500h14M5.500 1v14M10.500 1v14"/></svg>${n}</div>`).join('');
</script>
</body>
</html>
